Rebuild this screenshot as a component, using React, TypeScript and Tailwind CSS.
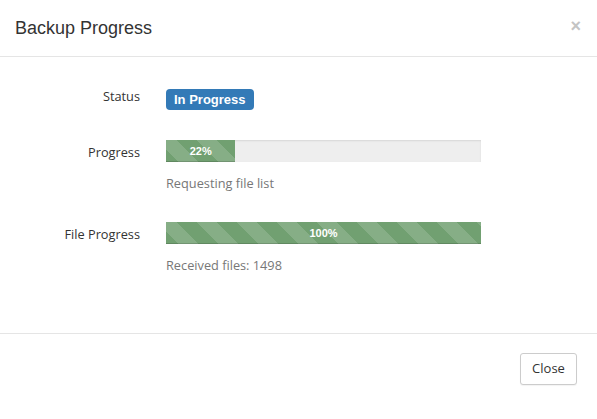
import React from 'react';

const stripes =
  'bg-[linear-gradient(45deg,rgba(255,255,255,.15)_25%,transparent_25%,transparent_50%,rgba(255,255,255,.15)_50%,rgba(255,255,255,.15)_75%,transparent_75%,transparent)] bg-[length:40px_40px] bg-[position:-9px_0]';

function ProgressBar({ value }: { value: number }) {
  return (
    <div className="h-[22px] w-[315px] bg-[#eeeeee] shadow-[inset_0_1px_2px_rgba(0,0,0,0.1)] overflow-hidden">
      <div
        className={`h-full bg-[#71a071] ${stripes} shadow-[inset_0_-1px_0_rgba(0,0,0,0.15)] flex items-center justify-center text-white text-[11px] font-bold font-['Liberation_Sans',Arial,sans-serif]`}
        style={{ width: `${value}%` }}
      >
        {value}%
      </div>
    </div>
  );
}

function Row({ label, children }: { label: string; children: React.ReactNode }) {
  return (
    <div className="flex">
      <div className="w-[140px] text-right text-[#333] pt-[3px]">{label}</div>
      <div className="ml-[26px]">{children}</div>
    </div>
  );
}

export default function App() {
  return (
    <div className="w-[597px] h-[419px] bg-white flex flex-col font-['Open_Sans',sans-serif] text-[12.75px]">
      <div className="h-[57px] border-b border-[#e5e5e5] flex items-center justify-between px-[15px]">
        <h4 className="text-[18px] text-[#333] font-['Liberation_Sans',Arial,sans-serif] leading-none -mt-[1px]">
          Backup Progress
        </h4>
        <span className="text-[#c4c4c4] text-[18px] font-bold leading-none font-['Liberation_Sans',Arial,sans-serif] -mt-[4px] mr-[1px]">
          ×
        </span>
      </div>

      <div className="flex-1 pt-[32px] flex flex-col">
        <div className="flex">
          <div className="w-[140px] text-right text-[#333] -mt-[2px]">Status</div>
          <div className="ml-[26px]">
            <span className="flex items-center h-[21px] bg-[#337ab7] text-white font-bold text-[13px] leading-none px-[8px] rounded-[4px] font-['Liberation_Sans',Arial,sans-serif]">
              In Progress
            </span>
          </div>
        </div>

        <div className="mt-[30px]">
          <Row label="Progress">
            <ProgressBar value={22} />
            <p className="mt-[12px] text-[#777]">Requesting file list</p>
          </Row>
        </div>

        <div className="mt-[29px]">
          <Row label="File Progress">
            <ProgressBar value={100} />
            <p className="mt-[12px] text-[#777]">Received files: 1498</p>
          </Row>
        </div>
      </div>

      <div className="h-[86px] border-t border-[#e5e5e5] flex items-start justify-end pr-[20px] pt-[19px]">
        <button className="h-[32px] w-[57px] border border-[#cccccc] rounded-[3px] bg-white text-[#333] text-[13px] shadow-[0_1px_1px_rgba(0,0,0,0.05)]">
          Close
        </button>
      </div>
    </div>
  );
}
